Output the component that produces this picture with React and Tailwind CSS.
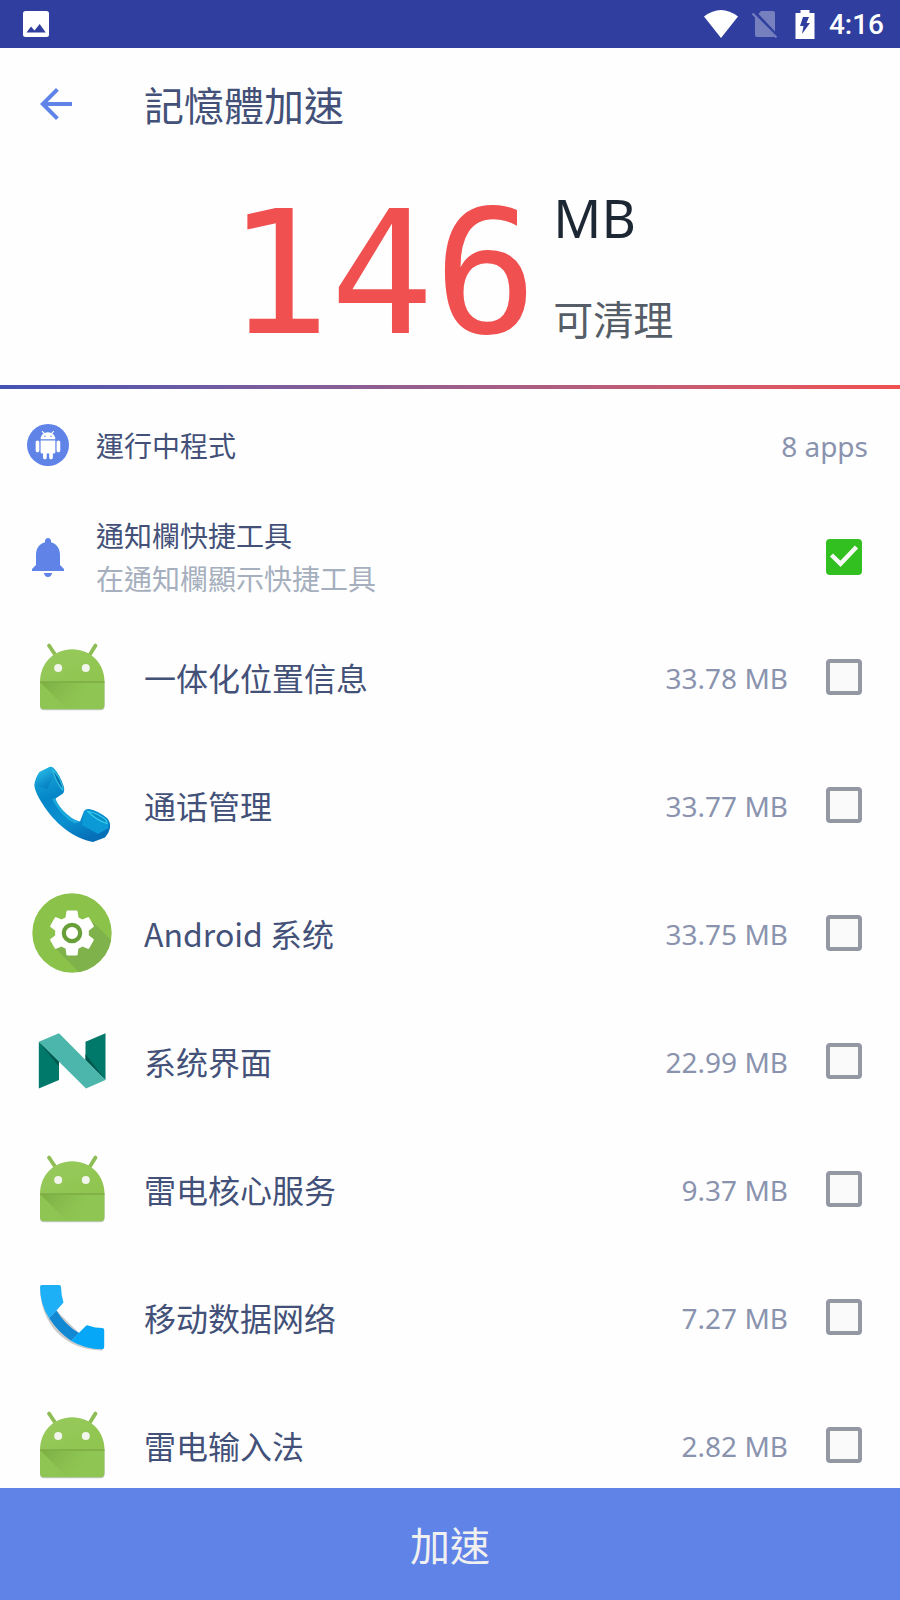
import { useState } from 'react';

const APPS = [
  { id: 'location', name: '一体化位置信息', size: '33.78 MB', icon: RobotIcon },
  { id: 'calls', name: '通话管理', size: '33.77 MB', icon: HandsetIcon },
  { id: 'system', name: 'Android 系统', size: '33.75 MB', icon: GearIcon },
  { id: 'ui', name: '系统界面', size: '22.99 MB', icon: NougatIcon },
  { id: 'core', name: '雷电核心服务', size: '9.37 MB', icon: RobotIcon },
  { id: 'mobile', name: '移动数据网络', size: '7.27 MB', icon: DialerIcon },
  { id: 'ime', name: '雷电输入法', size: '2.82 MB', icon: RobotIcon },
];

function RobotIcon() {
  return (
    <svg viewBox="0 0 80 80" className="size-20 shrink-0" aria-hidden="true">
      <defs>
        <linearGradient id="robotFold" x1="0" y1="0" x2="1" y2=".35">
          <stop offset="0" stopColor="#75a33c" stopOpacity=".75" />
          <stop offset=".7" stopColor="#83b548" stopOpacity=".25" />
          <stop offset="1" stopColor="#8bc34a" stopOpacity="0" />
        </linearGradient>
        <linearGradient id="robotHead" x1="0" y1="0" x2="1" y2="1">
          <stop offset="0" stopColor="#98ca5e" />
          <stop offset="1" stopColor="#8ec44e" />
        </linearGradient>
      </defs>
      <path d="M8 45h64.500v24.300a4 4 0 0 1-4 4H12a4 4 0 0 1-4-4z" fill="#000" opacity=".22" />
      <path d="M17 8.500l7 10.500M63.500 8.500L57 19" stroke="#8dbd55" strokeWidth="3.800" strokeLinecap="round" />
      <path d="M8 45C8 26 22 12.300 40.200 12.300S72.500 26 72.500 45z" fill="url(#robotHead)" />
      <path d="M8 45h64.500v23.300a4 4 0 0 1-4 4H12a4 4 0 0 1-4-4z" fill="#8fc653" />
      <path d="M8.500 45.500h50V72.300H35z" fill="url(#robotFold)" />
      <path d="M8 45h64.500" stroke="#7cab45" strokeWidth="1.400" />
      <circle cx="26.200" cy="31" r="4" fill="#f1f5ec" />
      <circle cx="53.800" cy="31" r="4" fill="#f1f5ec" />
    </svg>
  );
}

function HandsetIcon() {
  return (
    <svg viewBox="0 0 80 80" className="size-20 shrink-0" aria-hidden="true">
      <defs>
        <linearGradient id="handset" x1=".2" y1="0" x2=".6" y2="1">
          <stop offset="0" stopColor="#19a9d8" />
          <stop offset=".35" stopColor="#0586c8" />
          <stop offset=".7" stopColor="#0a90d0" />
          <stop offset="1" stopColor="#056fb8" />
        </linearGradient>
        <linearGradient id="handsetFace" x1="0" y1="0" x2=".5" y2="1">
          <stop offset="0" stopColor="#2cc8ee" />
          <stop offset="1" stopColor="#0780c4" />
        </linearGradient>
      </defs>
      <path d="M18 1.800L7.500 7Q3 13 2.300 20.500C3 26 6 32 10 38C16 48 24 57 33 64C42 71 52 75.500 61 77L73 72.500Q77 68 78 63Q78.500 57 75.500 53.500Q67 46 57 44Q54 43.500 52 46L48 56.500C41 55 35 49.500 31 45.500C27 41 24 36.500 23.500 33.500L31 28.500Q32.800 26 31.800 21.500Q28 10 22.500 4Q20.500 1.500 18 1.800z" fill="url(#handset)" />
      <path d="M18 2L7.500 7.500Q4 13 3 20L15 24L21 12Q22 4 18 2z" fill="url(#handsetFace)" />
      <path d="M20.500 5Q27 10 30.500 21Q31.300 24 30.500 25Q24 17 20.500 5z" fill="#0571ae" stroke="#2ebce0" strokeWidth="1.200" />
      <path d="M23.500 33.500C27 43 38 55 48 56.500L43 58.500C34 55 25 44 20 34z" fill="#27b9e4" opacity=".65" />
      <path d="M52 47L50 60L66 69L76.500 63Q77 57 74 54Q65 47 56 45z" fill="#0b9ad6" />
      <path d="M56 46.500Q66 48 74.500 55.500L75 58.500Q64 55 56 46.500z" fill="#0a8cc6" stroke="#36cbec" strokeWidth="1.200" />
    </svg>
  );
}

function GearIcon() {
  return (
    <svg viewBox="0 0 80 80" className="size-20 shrink-0" aria-hidden="true">
      <defs>
        <clipPath id="gearDisc">
          <circle cx="40" cy="40" r="39.700" />
        </clipPath>
      </defs>
      <circle cx="40" cy="40" r="39.700" fill="#8bc34a" />
      <path d="M60 28L90 58V90H58L24 56z" fill="#7fb24b" clipPath="url(#gearDisc)" />
      <path
        transform="translate(13 13) scale(2.250)"
        fill="#fff"
        d="M19.430 12.980c.04-.32.07-.64.07-.98s-.03-.66-.07-.98l2.110-1.650c.19-.15.24-.42.12-.64l-2-3.460c-.12-.22-.39-.3-.61-.22l-2.490 1c-.52-.4-1.080-.73-1.690-.98l-.38-2.650C14.460 2.180 14.250 2 14 2h-4c-.25 0-.46.18-.49.42l-.38 2.650c-.61.25-1.170.59-1.690.98l-2.490-1c-.23-.09-.49 0-.61.22l-2 3.460c-.13.22-.07.49.12.64l2.110 1.650c-.04.32-.07.65-.07.98s.03.66.07.98l-2.110 1.650c-.19.15-.24.42-.12.64l2 3.460c.12.22.39.3.61.22l2.490-1c.52.4 1.080.73 1.690.98l.38 2.650c.03.24.24.42.49.42h4c.25 0 .46-.18.49-.42l.38-2.650c.61-.25 1.170-.59 1.690-.98l2.490 1c.23.09.49 0 .61-.22l2-3.460c.12-.22.07-.49-.12-.64l-2.110-1.650z"
      />
      <circle cx="40" cy="40" r="8.200" fill="#fff" stroke="#689f38" strokeWidth="4.200" />
    </svg>
  );
}

function NougatIcon() {
  return (
    <svg viewBox="0 0 80 80" className="size-20 shrink-0" aria-hidden="true">
      <path d="M6.800 20.700L27 40v19L6.800 67.500z" fill="#00796b" />
      <path d="M6.800 20.700L27 40v5.500z" fill="#00594f" />
      <path d="M53.500 20.700l20-8.500V59l-20-20z" fill="#00796b" />
      <path d="M53.500 33l20 26-20-20z" fill="#00594f" />
      <path d="M6.800 20.700L27 12.200 73.500 59 54 67.500z" fill="#4db6ac" />
    </svg>
  );
}

function DialerIcon() {
  return (
    <svg viewBox="0 0 80 80" className="size-20 shrink-0" aria-hidden="true">
      <path d="M8 10C8 47 33 73.400 70.500 73.400L72 60 47 56 24.500 33.500z" fill="#000" opacity=".2" />
      <path d="M24.500 33.500Q33 48 47 56L39 63.700Q26 55 17 41z" fill="#1287d2" />
      <path d="M10 8h17q2 0 2 2 .2 8 2.500 15.500L24.500 33.500 17 41Q8 27 8 10q0-2 2-2z" fill="#1eb0f7" />
      <path d="M39 63.700L53.800 49q1-1 2.500-.5Q63 51 70 51.100q2.200 0 2.200 2V70q0 2.300-2.200 2.300Q53 72 39 63.700z" fill="#05a7f6" />
    </svg>
  );
}

function CheckBox(props) {
  return (
    <span className="relative size-9 shrink-0">
      <input
        type="checkbox"
        className="peer block size-9 cursor-pointer appearance-none rounded border-4 border-[#9398a2] bg-[#fafafa] checked:border-[#32bf20] checked:bg-[#32bf20]"
        {...props}
      />
      <svg viewBox="0 0 36 36" className="pointer-events-none absolute inset-0 hidden size-9 peer-checked:block" aria-hidden="true">
        <path d="M5.500 16l9 8.800L30.500 8" fill="none" stroke="#f7faf7" strokeWidth="4.400" />
      </svg>
    </span>
  );
}

function StatusBar() {
  return (
    <div className="flex h-12 shrink-0 items-center bg-[#303f9f] pr-4 pl-[23px] text-white">
      <svg viewBox="0 0 26 26" className="size-[26px]" aria-hidden="true">
        <rect width="26" height="26" rx="2.500" fill="#fff" />
        <path d="M3.500 21.500L8 15.500l3.500 4 5.200-6.500 6 8.500z" fill="#303f9f" />
      </svg>
      <div className="ml-auto flex items-center">
        <svg viewBox="0 0 36 28" className="mr-3 h-7 w-9" aria-hidden="true">
          <path d="M1 6.500Q18-6.500 35 6.500L18 28z" fill="#fff" />
        </svg>
        <svg viewBox="0 0 26 28" className="mr-[18px] h-7 w-[26px]" aria-hidden="true">
          <path d="M10 1h12q2 0 2 2v18.500L7.500 4zM4 6.500L23.500 26.500l-1 .5H6q-2 0-2-2z" fill="#7780be" />
          <path d="M1.500 3.500l24 24" stroke="#7780be" strokeWidth="2.200" />
        </svg>
        <svg viewBox="0 0 20 29" className="mr-3.5 h-[29px] w-5" aria-hidden="true">
          <path d="M5.500 0h9v3H19.500v26H.500V3h5z" fill="#fff" />
          <path d="M8 7h6l-2.500 6H15L7 24l1.500-8H5z" fill="#303f9f" />
        </svg>
        <time className="pt-0.5 font-['Roboto',sans-serif] text-[28px] leading-8 font-medium">4:16</time>
      </div>
    </div>
  );
}

export default function App() {
  const [quickTools, setQuickTools] = useState(true);
  const [selected, setSelected] = useState([]);

  const toggle = (id) => {
    setSelected((prev) => (prev.includes(id) ? prev.filter((x) => x !== id) : [...prev, id]));
  };

  return (
    <div className="flex h-screen flex-col bg-[#fefefe] font-['Noto_Sans','Noto_Sans_CJK_TC',sans-serif] text-[#435179]">
      <StatusBar />

      <header className="flex h-28 shrink-0 items-center pl-8">
        <button type="button" aria-label="返回" className="mr-16 size-12 cursor-pointer">
          <svg viewBox="0 0 24 24" className="size-12" aria-hidden="true">
            <path d="M20 11H7.830l5.590-5.590L12 4l-8 8 8 8 1.410-1.410L7.830 13H20v-2z" fill="#5f83e7" />
          </svg>
        </button>
        <h1 className="pt-1 text-[40px] leading-[56px]">記憶體加速</h1>
      </header>

      <section className="flex h-[225px] shrink-0 justify-center gap-4">
        <p className="pt-1 font-['DejaVu_Sans_Mono',monospace] text-[172px] leading-[220px] text-[#f05050]">146</p>
        <div className="flex flex-col pt-4">
          <span className="text-[53px] leading-[84px] text-[#1c2733]">MB</span>
          <span className="pt-8 text-[40px] leading-[56px] text-[#555e68]">可清理</span>
        </div>
      </section>
      <div className="h-1 shrink-0 bg-linear-to-r from-[#4352b4] to-[#f05050]" />

      <main className="min-h-0 flex-1 overflow-y-auto [scrollbar-width:none]">
        <div className="flex h-28 items-center pr-8">
          <div className="flex w-24 justify-center">
            <svg viewBox="0 0 42 42" className="size-[42px]" aria-hidden="true">
              <circle cx="21" cy="21" r="21" fill="#5f83e7" />
              <path
                transform="translate(6.200 7) scale(1.230 1.180)"
                fill="#fff"
                d="M6 18c0 .55.45 1 1 1h1v3.500c0 .83.67 1.500 1.500 1.500s1.500-.67 1.500-1.500V19h2v3.500c0 .83.67 1.500 1.500 1.500s1.500-.67 1.500-1.500V19h1c.55 0 1-.45 1-1V8H6v10zM3.500 8C2.670 8 2 8.670 2 9.500v7c0 .83.67 1.500 1.500 1.500S5 17.330 5 16.500v-7C5 8.670 4.330 8 3.500 8zm17 0c-.83 0-1.500.67-1.500 1.500v7c0 .83.67 1.500 1.500 1.500s1.500-.67 1.500-1.500v-7c0-.83-.67-1.500-1.500-1.500zm-4.970-5.840l1.300-1.300c.2-.2.2-.51 0-.71-.2-.2-.51-.2-.71 0l-1.480 1.480C13.850 1.230 12.950 1 12 1c-.96 0-1.860.23-2.660.63L7.850.15c-.2-.2-.51-.2-.71 0-.2.2-.2.51 0 .71l1.310 1.310C6.970 3.260 6 5.010 6 7h12c0-1.990-.97-3.750-2.470-4.840zM10 5H9V4h1v1zm5 0h-1V4h1v1z"
              />
            </svg>
          </div>
          <h2 className="flex-1 pt-0.5 text-[28px] leading-10">運行中程式</h2>
          <span className="pt-0.5 text-[28px] leading-10 text-[#8a93ae]">8 apps</span>
        </div>

        <label className="flex h-28 cursor-pointer items-center pr-[38px]">
          <span className="flex w-24 justify-center">
            <svg viewBox="0 0 24 24" className="size-12" aria-hidden="true">
              <path
                fill="#5f83e7"
                d="M12 22c1.100 0 2-.9 2-2h-4c0 1.100.89 2 2 2zm6-6v-5c0-3.070-1.640-5.640-4.500-6.320V4c0-.83-.67-1.500-1.500-1.500s-1.500.67-1.500 1.500v.68C7.630 5.360 6 7.920 6 11v5l-2 2v1h16v-1l-2-2z"
              />
            </svg>
          </span>
          <span className="flex flex-1 flex-col pt-0.5 text-[28px] leading-[43px]">
            <span>通知欄快捷工具</span>
            <span className="text-[#a5afbd]">在通知欄顯示快捷工具</span>
          </span>
          <CheckBox checked={quickTools} onChange={(e) => setQuickTools(e.target.checked)} />
        </label>

        <ul>
          {APPS.map(({ id, name, size, icon: Icon }) => (
            <li key={id}>
              <label className="flex h-32 cursor-pointer items-center pr-[38px] pl-8">
                <Icon />
                <span lang="zh-CN" className="flex-1 pl-8 font-['Noto_Sans_CJK_SC',sans-serif] text-[32px] leading-[48px]">{name}</span>
                <span className="pt-0.5 pr-[38px] text-[28px] leading-10 text-[#8a93ae]">{size}</span>
                <CheckBox checked={selected.includes(id)} onChange={() => toggle(id)} />
              </label>
            </li>
          ))}
        </ul>
      </main>

      <button type="button" className="h-28 shrink-0 cursor-pointer bg-[#5f83e7] pt-1 text-[40px] text-[#f0f0f0]">
        加速
      </button>
    </div>
  );
}
